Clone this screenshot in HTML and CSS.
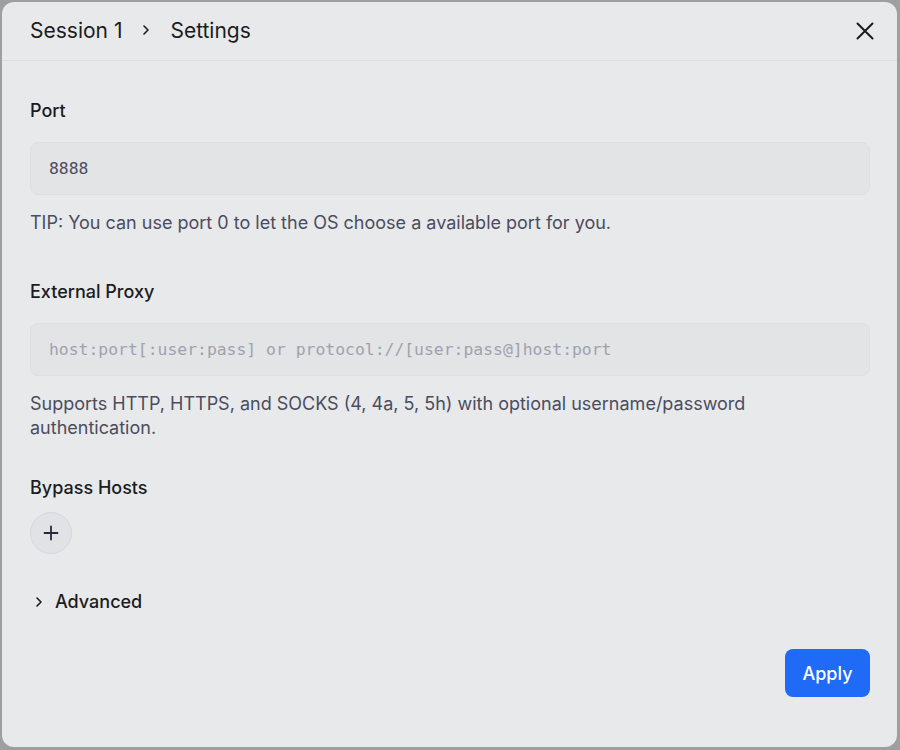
FILE: index.html
```html
<!DOCTYPE html>
<html lang="en">
  <head>
    <meta charset="UTF-8" />
    <title>Session 1 Settings</title>
    <link rel="stylesheet" href="styles.css">
  </head>
  <body>
    <section class="dialog">
      <header class="dialog-head">
        <h1 class="crumbs">
          <span>Session 1</span>
          <svg class="crumb-sep" width="16" height="16" viewBox="0 0 16 16">
            <path d="M6 4 L10 8 L6 12" fill="none" stroke="currentColor" stroke-width="1.6" stroke-linecap="round" stroke-linejoin="round" />
          </svg>
          <span>Settings</span>
        </h1>
        <button class="close" aria-label="Close">
          <svg width="24" height="24" viewBox="0 0 24 24">
            <path d="M4.5 4.5 L19.5 19.5 M19.5 4.5 L4.5 19.5" fill="none" stroke="currentColor" stroke-width="2" stroke-linecap="round" />
          </svg>
        </button>
      </header>

      <main class="dialog-body">
        <div class="field field-port">
          <label class="label">Port</label>
          <input class="input" type="text" value="8888" />
          <p class="hint">TIP: You can use port 0 to let the OS choose a available port for you.</p>
        </div>

        <div class="field">
          <label class="label">External Proxy</label>
          <input class="input" type="text" placeholder="host:port[:user:pass] or protocol://[user:pass@]host:port" />
          <p class="hint">Supports HTTP, HTTPS, and SOCKS (4, 4a, 5, 5h) with optional username/password authentication.</p>
        </div>

        <div class="field">
          <label class="label label-tight">Bypass Hosts</label>
          <button class="add" aria-label="Add host">
            <svg width="20" height="20" viewBox="0 0 20 20">
              <path d="M10 3.5 V16.5 M3.5 10 H16.5" fill="none" stroke="currentColor" stroke-width="1.8" stroke-linecap="round" />
            </svg>
          </button>
        </div>

        <button class="advanced">
          <svg width="14" height="14" viewBox="0 0 14 14">
            <path d="M5 3 L9 7 L5 11" fill="none" stroke="currentColor" stroke-width="1.6" stroke-linecap="round" stroke-linejoin="round" />
          </svg>
          <span>Advanced</span>
        </button>

        <footer class="actions">
          <button class="apply">Apply</button>
        </footer>
      </main>
    </section>
  </body>
</html>
```

FILE: styles.css
```css
html,
body {
  height: 100%;
}

body {
  margin: 0;
  padding: 2px 3px 3px 2px;
  box-sizing: border-box;
  background-color: #9f9f9f;
  font-family: "Inter", "Noto Sans", sans-serif;
}

.dialog {
  height: 100%;
  box-sizing: border-box;
  background-color: #e8e9eb;
  border-radius: 12px;
  display: flex;
  flex-direction: column;
}

.dialog-head {
  height: 58px;
  padding: 0 18px 0 28px;
  border-bottom: 1px solid #dcdde0;
  display: flex;
  align-items: center;
  justify-content: space-between;
}

.crumbs {
  margin: 0 0 2px;
  font-size: 21px;
  font-weight: 400;
  color: #1b1c21;
  display: flex;
  align-items: center;
  gap: 16px;
}

.crumb-sep {
  color: #1b1c21;
}

.close {
  border: none;
  background: none;
  padding: 0;
  width: 28px;
  height: 28px;
  color: #1b1c21;
  display: flex;
  align-items: center;
  justify-content: center;
  cursor: pointer;
}

.dialog-body {
  flex: 1;
  padding: 39px 27px 50px 28px;
  display: flex;
  flex-direction: column;
}

.field {
  margin-bottom: 37px;
}

.field-port {
  margin-bottom: 46px;
}

.label {
  display: block;
  font-size: 18px;
  line-height: 22px;
  font-weight: 500;
  color: #1b1c21;
  margin-bottom: 20px;
}

.label-tight {
  margin-bottom: 13px;
}

.input {
  display: block;
  width: 100%;
  box-sizing: border-box;
  height: 53px;
  padding: 0 18px;
  border: 1px solid #dedfe2;
  border-radius: 8px;
  background-color: #e3e4e6;
  font-family: "DejaVu Sans Mono", monospace;
  font-size: 16.4px;
  color: #4a4c60;
  outline: none;
}

.input::placeholder {
  color: #9fa2ae;
}

.hint {
  margin: 16px 0 0;
  font-size: 18px;
  line-height: 24px;
  color: #4b4d5d;
}

.add {
  width: 42px;
  height: 42px;
  border-radius: 50%;
  border: 1px solid #d6d7db;
  background-color: #e1e2e6;
  color: #26283a;
  display: flex;
  align-items: center;
  justify-content: center;
  padding: 0;
  cursor: pointer;
}

.advanced {
  align-self: flex-start;
  border: none;
  background: none;
  padding: 0 0 0 2px;
  font-family: inherit;
  font-size: 18px;
  line-height: 22px;
  font-weight: 500;
  color: #1b1c21;
  display: flex;
  align-items: center;
  gap: 9px;
  cursor: pointer;
}

.actions {
  margin-top: auto;
  display: flex;
  justify-content: flex-end;
}

.apply {
  width: 85px;
  height: 48px;
  border: none;
  border-radius: 8px;
  background-color: #1f6af6;
  color: #ffffff;
  font-family: inherit;
  font-size: 18px;
  font-weight: 500;
  cursor: pointer;
}
```
